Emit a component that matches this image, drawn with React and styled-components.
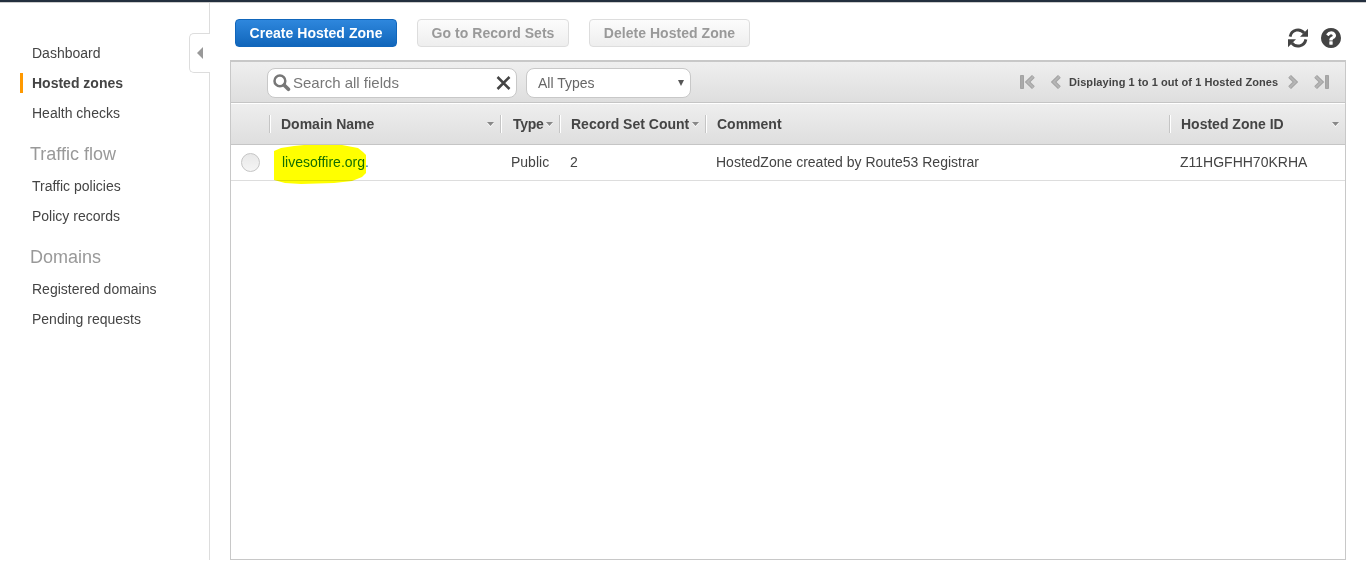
import React from 'react';
import styled, { createGlobalStyle, css } from 'styled-components';

const Global = createGlobalStyle`
  * { box-sizing: border-box; }
  body {
    margin: 0;
    background: #fff;
    color: #444;
    font: 14px/20px "Liberation Sans", Arial, sans-serif;
    overflow: hidden;
  }
`;

const Page = styled.div`
  height: 567px;
  display: flex;
  flex-direction: column;
`;
const TopBar = styled.div`
  height: 3px;
  flex: none;
  background: #232f3e;
  border-bottom: 1px solid #ccc;
`;
const Body = styled.div`
  display: flex;
  height: 557px;
`;
const Sidebar = styled.nav`
  position: relative;
  width: 210px;
  flex: none;
  border-right: 1px solid #ddd;
  padding: 40px 0 0 20px;
`;
const NavItem = styled.a`
  display: block;
  height: 20px;
  margin-bottom: 10px;
  padding-left: 9px;
  border-left: 3px solid transparent;
  ${p => p.$active && css`
    border-left-color: #f90;
    font-weight: bold;
  `}
`;
const NavHeading = styled.h2`
  margin: 21px 0 12px;
  padding-left: 10px;
  font-size: 18px;
  font-weight: normal;
  line-height: 20px;
  color: #999;
`;
const CollapseTab = styled.button`
  position: absolute;
  top: 30px;
  right: -1px;
  width: 21px;
  height: 40px;
  padding: 0 0 0 7px;
  border: 1px solid #ddd;
  border-right: 0;
  border-radius: 5px 0 0 5px;
  background: #fff;
  display: flex;
  align-items: center;
`;

const Main = styled.main`
  flex: 1;
  padding: 0 20px;
  display: flex;
  flex-direction: column;
`;
const Actions = styled.div`
  height: 57px;
  flex: none;
  padding: 16px 5px 0 5px;
  display: flex;
  align-items: flex-start;
  gap: 20px;
`;
const Button = styled.button`
  width: ${p => p.$w}px;
  height: 28px;
  padding: 0;
  border-radius: 4px;
  font: bold 14px/20px "Liberation Sans", Arial, sans-serif;
  letter-spacing: 0.04px;
  white-space: nowrap;
  border: 1px solid ${p => (p.$primary ? '#1166bb' : '#ddd')};
  color: ${p => (p.$primary ? '#fff' : '#999')};
  background: ${p => (p.$primary ? 'linear-gradient(#2e87dd, #1166bb)' : 'linear-gradient(#fcfcfc, #eee)')};
`;
const IconGroup = styled.div`
  margin: 9px 0 0 auto;
  display: flex;
  gap: 13px;
  color: #444;
  svg { display: block; }
`;

const Panel = styled.section`
  flex: 1;
  border: 1px solid #c8c8c8;
  border-top-width: 2px;
`;
const Toolbar = styled.div`
  height: 41px;
  padding: 6px 16px 0 36px;
  display: flex;
  background: linear-gradient(#efefef, #dedede);
  border-bottom: 1px solid #c5c5c5;
`;
const Field = styled.div`
  width: ${p => p.$w}px;
  height: 30px;
  margin-right: 9px;
  padding: 0 5px;
  border: 1px solid #c8c8c8;
  border-radius: 8px;
  background: #fff;
  display: flex;
  align-items: center;
  justify-content: space-between;
  color: #777;
`;
const SearchText = styled.span`
  flex: 1;
  padding-left: 2px;
  font-size: 15px;
`;
const SelectText = styled.span`
  padding-left: 6px;
  color: #666;
`;
const Pager = styled.div`
  margin-left: auto;
  height: 28px;
  display: flex;
  align-items: center;
  font-size: 11px;
  font-weight: bold;
  white-space: nowrap;
  svg { flex: none; }
`;
const PagerText = styled.span`
  width: 210px;
  margin: 0 9px 0 8px;
  letter-spacing: 0.085px;
`;
const PagerGap = styled.span`
  width: 16px;
`;

const columnGrid = css`
  display: grid;
  grid-template-columns: 38px 231px 59px 146px 464px 1fr;
  align-items: center;
  white-space: nowrap;
`;
const HeaderRow = styled.div`
  ${columnGrid}
  height: 42px;
  border-top: 1px solid #fff;
  border-bottom: 1px solid #c5c5c5;
  background: linear-gradient(#eee, #dedede);
`;
const HeaderCell = styled.div`
  height: 18px;
  padding: 0 6px 0 ${p => (p.$tight ? 12 : 11)}px;
  letter-spacing: ${p => (p.$tight ? '-0.3px' : 'normal')};
  border-left: 1px solid #c5c5c5;
  box-shadow: inset 1px 0 #fff;
  display: flex;
  align-items: center;
  justify-content: space-between;
  font-weight: bold;
  svg { flex: none; }
`;
const Row = styled.div`
  ${columnGrid}
  height: 36px;
  border-bottom: 1px solid #ddd;
`;
const Cell = styled.div`
  height: 35px;
  padding-left: ${p => p.$pad}px;
  line-height: 34px;
`;
const Radio = styled.span`
  display: block;
  width: 19px;
  height: 19px;
  margin-left: 10px;
  border: 1px solid #c5c5c5;
  border-radius: 50%;
  background: linear-gradient(#e8e8e8, #f5f5f5);
`;
const DomainLink = styled.a`
  position: relative;
  display: inline-block;
  color: #146eb4;
`;
const Marker = styled.svg`
  position: absolute;
  left: -8px;
  top: 0;
  mix-blend-mode: multiply;
`;

const Caret = () => (
  <svg width="7" height="5" viewBox="0 0 7 5">
    <path d="M0 1h7L3.5 5z" fill="#fff" />
    <path d="M0 0h7L3.5 4z" fill="#888" />
  </svg>
);

const SearchIcon = () => (
  <svg width="18" height="18" viewBox="0 0 18 18" fill="none" stroke="#777">
    <circle cx="6.9" cy="6.9" r="5.4" strokeWidth="2.5" />
    <path d="M11.3 11.3l4.1 4" strokeWidth="3.7" strokeLinecap="round" />
  </svg>
);

const RefreshIcon = () => (
  <svg width="20" height="20" viewBox="0 0 20 20">
    <path d="M2.1 8.6C3.6 1.3 12 0 16.2 5" fill="none" stroke="currentColor" strokeWidth="2.9" />
    <path d="M20 0.8v8h-8z" fill="currentColor" />
    <g transform="rotate(180 10 10)">
      <path d="M2.1 8.6C3.6 1.3 12 0 16.2 5" fill="none" stroke="currentColor" strokeWidth="2.9" />
      <path d="M20 0.8v8h-8z" fill="currentColor" />
    </g>
  </svg>
);

const HelpIcon = () => (
  <svg width="20" height="20" viewBox="128 128 1536 1536" fill="currentColor">
    <path d="M1024 1376v-192q0-14-9-23t-23-9h-192q-14 0-23 9t-9 23v192q0 14 9 23t23 9h192q14 0 23-9t9-23zm256-672q0-88-55.5-163t-138.5-116-170-41q-243 0-371 213-15 24 8 42l132 100q7 6 19 6 16 0 25-12 53-68 86-92 34-24 86-24 48 0 85.5 26t37.5 59q0 38-20 61t-68 45q-63 28-115.5 86.5t-52.5 125.5v36q0 14 9 23t23 9h192q14 0 23-9t9-23q0-19 21.5-49.5t54.5-49.5q32-18 49-28.5t46-35 44.5-48 28-60.5 12.5-81zm384 192q0 209-103 385.5t-279.5 279.5-385.5 103-385.5-103-279.5-279.5-103-385.5 103-385.5 279.5-279.5 385.5-103 385.5 103 279.5 279.5 103 385.5z" />
  </svg>
);

const PageArrow = ({ end, back }) => (
  <svg width={end ? 15 : 10} height="14" viewBox={end ? '0 0 15 14' : '0 0 10 14'} fill="none">
    <g transform={back ? `translate(${end ? 15 : 10} 0) scale(-1 1)` : undefined}>
      <path d="M1.6 1.4L7.4 7l-5.8 5.6" stroke="#a3a3a3" strokeWidth="4" />
      <path d="M1.6 1.4L7.4 7l-5.8 5.6" stroke="#b5b5b5" strokeWidth="2" />
      {end && <path d="M11.5 0.5h3v13h-3z" fill="#aaa" stroke="#a3a3a3" />}
    </g>
  </svg>
);

export default function App() {
  return (
    <Page>
      <Global />
      <TopBar />
      <Body>
        <Sidebar>
          <NavItem>Dashboard</NavItem>
          <NavItem $active>Hosted zones</NavItem>
          <NavItem>Health checks</NavItem>
          <NavHeading>Traffic flow</NavHeading>
          <NavItem>Traffic policies</NavItem>
          <NavItem>Policy records</NavItem>
          <NavHeading>Domains</NavHeading>
          <NavItem>Registered domains</NavItem>
          <NavItem>Pending requests</NavItem>
          <CollapseTab aria-label="Collapse">
            <svg width="6" height="12" viewBox="0 0 6 12"><path d="M6 0v12L0 6z" fill="#999" /></svg>
          </CollapseTab>
        </Sidebar>
        <Main>
          <Actions>
            <Button $primary $w={162}>Create Hosted Zone</Button>
            <Button $w={152}>Go to Record Sets</Button>
            <Button $w={161}>Delete Hosted Zone</Button>
            <IconGroup>
              <RefreshIcon />
              <HelpIcon />
            </IconGroup>
          </Actions>
          <Panel>
            <Toolbar>
              <Field $w={250}>
                <SearchIcon />
                <SearchText>Search all fields</SearchText>
                <svg width="15" height="15" viewBox="0 0 15 15"><path d="M1.5 1l12 12M13.5 1l-12 12" stroke="#444" strokeWidth="2.5" /></svg>
              </Field>
              <Field $w={165}>
                <SelectText>All Types</SelectText>
                <svg width="7" height="7" viewBox="0 0 7 7"><path d="M0 0h6L3 6z" fill="#555" /></svg>
              </Field>
              <Pager>
                <PageArrow end back />
                <PagerGap />
                <PageArrow back />
                <PagerText>Displaying 1 to 1 out of 1 Hosted Zones</PagerText>
                <PageArrow />
                <PagerGap />
                <PageArrow end />
              </Pager>
            </Toolbar>
            <HeaderRow>
              <span />
              <HeaderCell>Domain Name<Caret /></HeaderCell>
              <HeaderCell $tight>Type<Caret /></HeaderCell>
              <HeaderCell>Record Set Count<Caret /></HeaderCell>
              <HeaderCell>Comment</HeaderCell>
              <HeaderCell>Hosted Zone ID<Caret /></HeaderCell>
            </HeaderRow>
            <Row>
              <Radio />
              <Cell $pad={13}>
                <DomainLink>
                  livesoffire.org.
                  <Marker width="92" height="39" viewBox="0 0 92 39">
                    <path d="M0 6L7 3L20 1L30 0H68L84 3L89 7L92 10V28L88 32L78 36L60 38L27 39L11 38L0 35z" fill="#ff0" />
                  </Marker>
                </DomainLink>
              </Cell>
              <Cell $pad={11}>Public</Cell>
              <Cell $pad={11}>2</Cell>
              <Cell $pad={11}>HostedZone created by Route53 Registrar</Cell>
              <Cell $pad={11}>Z11HGFHH70KRHA</Cell>
            </Row>
          </Panel>
        </Main>
      </Body>
    </Page>
  );
}
